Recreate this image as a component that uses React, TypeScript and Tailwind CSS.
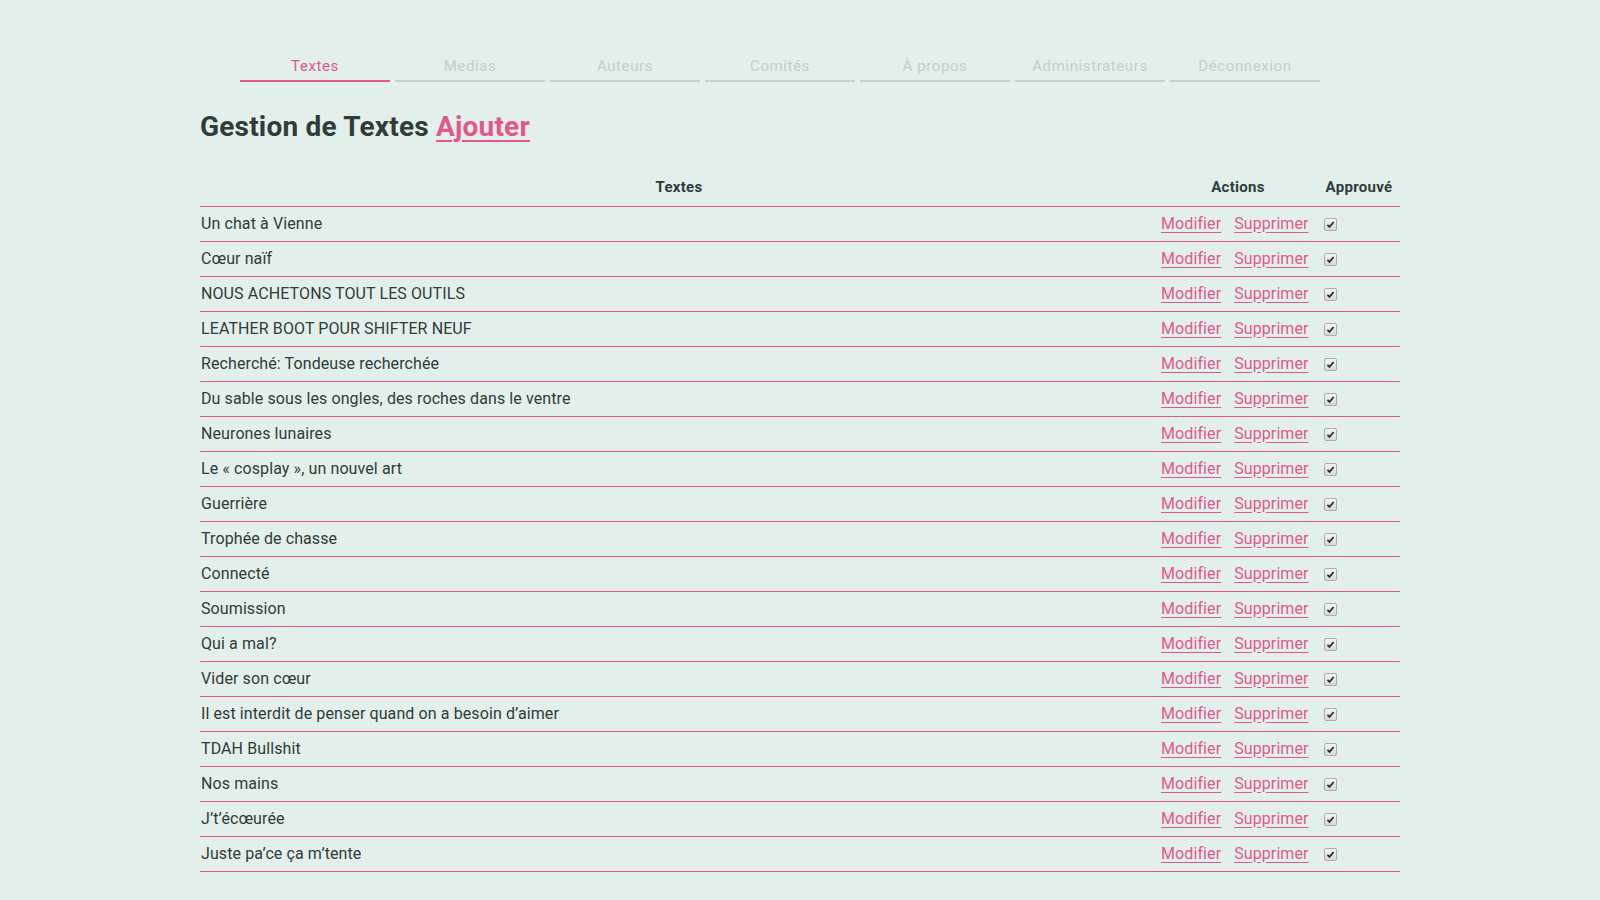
const FONT = "font-['Roboto','Liberation_Sans',sans-serif]";

const tabs = ["Textes", "Medias", "Auteurs", "Comités", "À propos", "Administrateurs", "Déconnexion"];

const textes = [
  "Un chat à Vienne",
  "Cœur naïf",
  "NOUS ACHETONS TOUT LES OUTILS",
  "LEATHER BOOT POUR SHIFTER NEUF",
  "Recherché: Tondeuse recherchée",
  "Du sable sous les ongles, des roches dans le ventre",
  "Neurones lunaires",
  "Le « cosplay », un nouvel art",
  "Guerrière",
  "Trophée de chasse",
  "Connecté",
  "Soumission",
  "Qui a mal?",
  "Vider son cœur",
  "Il est interdit de penser quand on a besoin d’aimer",
  "TDAH Bullshit",
  "Nos mains",
  "J’t’écœurée",
  "Juste pa’ce ça m’tente",
];

function Check() {
  return (
    <span className="inline-flex h-[13px] w-[13px] items-center justify-center rounded-[2px] border border-[#a9adab] bg-gradient-to-b from-[#f4f4f4] to-[#d8d8d8] align-middle">
      <svg viewBox="0 0 10 10" className="h-[9px] w-[9px]">
        <path d="M1.6 5.4 L3.9 7.6 L8.5 2.2" fill="none" stroke="#2f2f2f" strokeWidth="2" />
      </svg>
    </span>
  );
}

export default function App() {
  return (
    <div className={`min-h-[900px] w-full bg-[#e2efea] ${FONT} text-[#2f3c39]`}>
      <nav className="flex gap-[5px] pt-[54px] pl-[240px]">
        {tabs.map((t, i) => (
          <a
            key={t}
            className={`w-[150px] border-b-2 pb-[2px] text-center text-[15px] leading-[24px] tracking-[0.6px] ${
              i === 0 ? "border-[#e2588b] text-[#e2588b]" : "border-[#c6d0cc] text-[#c3ceca]"
            }`}
          >
            {t}
          </a>
        ))}
      </nav>

      <div className="mx-auto w-[1200px]">
        <h1 className="mt-[20px] text-[28px] leading-[50px] font-bold tracking-[0.2px]">
          Gestion de Textes{" "}
          <a className="text-[#e2588b] underline decoration-2 underline-offset-[4px]">Ajouter</a>
        </h1>

        <table className="mt-[19px] w-full table-fixed border-collapse">
          <thead>
            <tr className="border-b border-[#e0528a]">
              <th className="h-[35px] pb-[3px] text-center text-[15px] font-bold tracking-[0.3px]">Textes</th>
              <th className="w-[160px] pb-[3px] text-center text-[15px] font-bold tracking-[0.3px]">Actions</th>
              <th className="w-[82px] pb-[3px] text-center text-[15px] font-bold tracking-[0.3px]">Approuvé</th>
            </tr>
          </thead>
          <tbody>
            {textes.map((t) => (
              <tr key={t} className="h-[35px] border-b border-[#e0528a]">
                <td className="pl-[1px] text-[16px] tracking-[0.1px]">{t}</td>
                <td className="pl-[3px] text-[16px] tracking-[0.1px] whitespace-nowrap">
                  <a className="text-[#e2588b] underline underline-offset-[3px]">Modifier</a>
                  <a className="ml-[13px] text-[#e2588b] underline underline-offset-[3px]">Supprimer</a>
                </td>
                <td className="pl-[6px]">
                  <Check />
                </td>
              </tr>
            ))}
          </tbody>
        </table>
      </div>
    </div>
  );
}
